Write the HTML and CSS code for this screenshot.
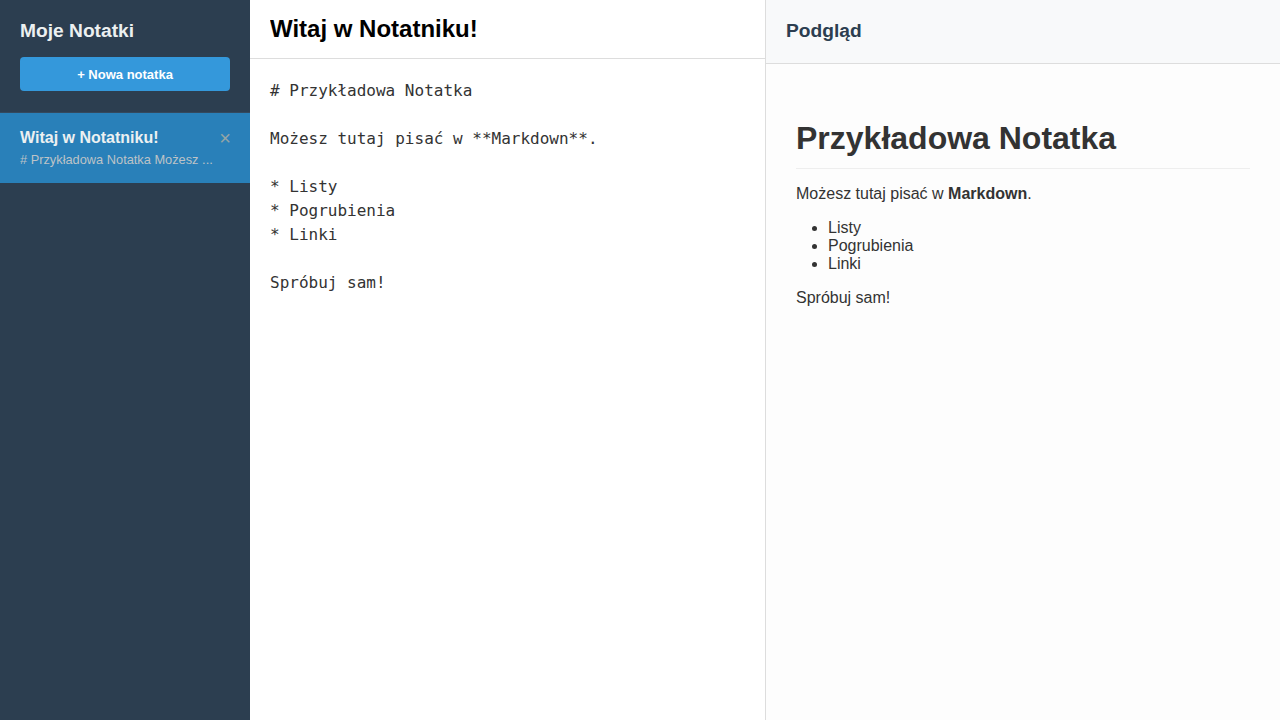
FILE: index.html
```html
<!DOCTYPE html>
<html lang="pl">
<head>
    <meta charset="UTF-8">
    <meta name="viewport" content="width=device-width, initial-scale=1.0">
    <title>Notatnik Markdown</title>
    <link rel="stylesheet" href="styles.css">
</head>
<body>
    <div class="app">
        <aside class="sidebar">
            <div class="sidebar-header">
                <h2>Moje Notatki</h2>
                <button class="new-note">+ Nowa notatka</button>
            </div>
            <ul class="notes-list">
                <li class="note-item active">
                    <div class="note-text">
                        <div class="note-title">Witaj w Notatniku!</div>
                        <div class="note-preview"># Przykładowa Notatka Możesz ...</div>
                    </div>
                    <span class="delete-note">&times;</span>
                </li>
            </ul>
        </aside>

        <main class="editor">
            <div class="editor-header">
                <input type="text" class="note-title-input" value="Witaj w Notatniku!">
            </div>
            <textarea class="note-content"># Przykładowa Notatka

Możesz tutaj pisać w **Markdown**.

* Listy
* Pogrubienia
* Linki

Spróbuj sam!</textarea>
        </main>

        <section class="preview">
            <div class="preview-header">
                <h3>Podgląd</h3>
            </div>
            <div class="preview-content">
                <h1>Przykładowa Notatka</h1>
                <p>Możesz tutaj pisać w <strong>Markdown</strong>.</p>
                <ul>
                    <li>Listy</li>
                    <li>Pogrubienia</li>
                    <li>Linki</li>
                </ul>
                <p>Spróbuj sam!</p>
            </div>
        </section>
    </div>
</body>
</html>
```

FILE: styles.css
```css
* {
    box-sizing: border-box;
}
body {
    margin: 0;
    font-family: "Liberation Sans", Arial, sans-serif;
    color: #333;
    height: 100vh;
    overflow: hidden;
}
.app {
    display: flex;
    height: 100vh;
}

/* sidebar */
.sidebar {
    width: 250px;
    flex-shrink: 0;
    background-color: #2c3e50;
    color: #ecf0f1;
    display: flex;
    flex-direction: column;
}
.sidebar-header {
    padding: 20px 20px 21px;
    border-bottom: 1px solid #34495e;
}
.sidebar-header h2 {
    margin: 0 0 15px;
    font-size: 1.2em;
    line-height: 22px;
}
.new-note {
    display: block;
    width: 100%;
    height: 34px;
    padding: 0 10px;
    border: none;
    border-radius: 4px;
    background-color: #3498db;
    color: white;
    font-family: "Liberation Sans", Arial, sans-serif;
    font-size: 13px;
    font-weight: bold;
    cursor: pointer;
}
.new-note:hover {
    background-color: #2980b9;
}
.notes-list {
    list-style: none;
    margin: 0;
    padding: 0;
}
.note-item {
    display: flex;
    align-items: flex-start;
    justify-content: space-between;
    height: 70px;
    padding: 16px 20px 0;
    cursor: pointer;
}
.note-item.active {
    background-color: #2980b9;
}
.note-text {
    min-width: 0;
}
.note-title {
    font-size: 16px;
    font-weight: bold;
    line-height: 18px;
}
.note-preview {
    margin-top: 5px;
    font-size: 0.8em;
    color: #bdc3c7;
    white-space: nowrap;
    overflow: hidden;
    text-overflow: ellipsis;
}
.delete-note {
    color: #95a5a6;
    font-size: 20px;
    line-height: 18px;
    margin-right: -1px;
}

/* editor */
.editor {
    flex: 1;
    display: flex;
    flex-direction: column;
    background: white;
    border-right: 1px solid #ddd;
}
.editor-header {
    height: 59px;
    padding: 15px 20px 0;
    border-bottom: 1px solid #ddd;
}
.note-title-input {
    width: 100%;
    border: none;
    outline: none;
    padding: 0;
    font-family: "Liberation Sans", Arial, sans-serif;
    font-size: 24px;
    font-weight: bold;
    color: #000;
}
.note-content {
    flex: 1;
    border: none;
    outline: none;
    resize: none;
    padding: 20px;
    font-family: "DejaVu Sans Mono", monospace;
    font-size: 16px;
    line-height: 24px;
    color: #333;
}

/* preview */
.preview {
    width: 514px;
    flex-shrink: 0;
    background-color: #fdfdfd;
    display: flex;
    flex-direction: column;
}
.preview-header {
    height: 64px;
    padding: 20px;
    background-color: #f8f9fa;
    border-bottom: 1px solid #ddd;
}
.preview-header h3 {
    margin: 0;
    font-size: 1.2em;
    line-height: 22px;
    color: #2c3e50;
}
.preview-content {
    padding: 30px;
    line-height: normal;
}
.preview-content h1 {
    margin: 26px 0 16px;
    padding-bottom: 11px;
    font-size: 32px;
    border-bottom: 1px solid #eee;
}
.preview-content p {
    margin: 16px 0;
}
.preview-content ul {
    margin: 16px 0;
    padding-left: 32px;
}
```
